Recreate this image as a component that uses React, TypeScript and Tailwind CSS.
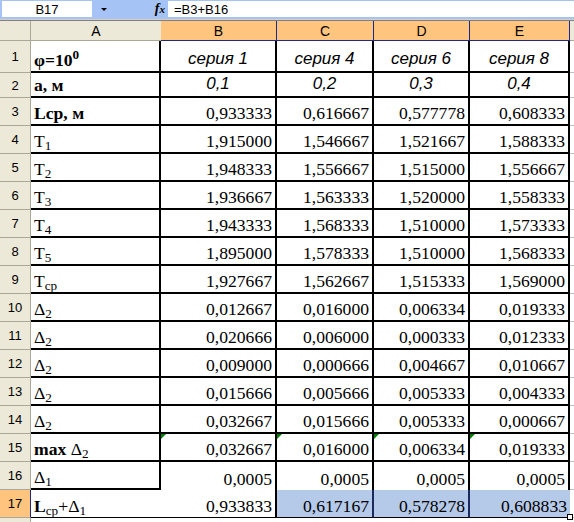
import React from 'react';

const W = ['w-[130px]', 'w-[116px]', 'w-[97px]', 'w-[96px]', 'w-[100px]'];
const HW = ['w-[130px]', 'w-[116px]', 'w-[97px]', 'w-[96px]', 'w-[100px]'];

type R = { n: number; h: string; label: React.ReactNode; vals: string[]; italic?: boolean };

const rows: R[] = [
  { n: 1, h: 'h-[32px]', label: <b>φ=10<sup>0</sup></b>, vals: ['серия 1', 'серия 4', 'серия 6', 'серия 8'], italic: true },
  { n: 2, h: 'h-[25px]', label: <b>a, м</b>, vals: ['0,1', '0,2', '0,3', '0,4'], italic: true },
  { n: 3, h: 'h-[28px]', label: <b>Lср, м</b>, vals: ['0,933333', '0,616667', '0,577778', '0,608333'] },
  { n: 4, h: 'h-[28px]', label: <>T<sub>1</sub></>, vals: ['1,915000', '1,546667', '1,521667', '1,588333'] },
  { n: 5, h: 'h-[28px]', label: <>T<sub>2</sub></>, vals: ['1,948333', '1,556667', '1,515000', '1,556667'] },
  { n: 6, h: 'h-[28px]', label: <>T<sub>3</sub></>, vals: ['1,936667', '1,563333', '1,520000', '1,558333'] },
  { n: 7, h: 'h-[28px]', label: <>T<sub>4</sub></>, vals: ['1,943333', '1,568333', '1,510000', '1,573333'] },
  { n: 8, h: 'h-[28px]', label: <>T<sub>5</sub></>, vals: ['1,895000', '1,578333', '1,510000', '1,568333'] },
  { n: 9, h: 'h-[28px]', label: <>T<sub>ср</sub></>, vals: ['1,927667', '1,562667', '1,515333', '1,569000'] },
  { n: 10, h: 'h-[28px]', label: <>Δ<sub>2</sub></>, vals: ['0,012667', '0,016000', '0,006334', '0,019333'] },
  { n: 11, h: 'h-[28px]', label: <>Δ<sub>2</sub></>, vals: ['0,020666', '0,006000', '0,000333', '0,012333'] },
  { n: 12, h: 'h-[28px]', label: <>Δ<sub>2</sub></>, vals: ['0,009000', '0,000666', '0,004667', '0,010667'] },
  { n: 13, h: 'h-[28px]', label: <>Δ<sub>2</sub></>, vals: ['0,015666', '0,005666', '0,005333', '0,004333'] },
  { n: 14, h: 'h-[28px]', label: <>Δ<sub>2</sub></>, vals: ['0,032667', '0,015666', '0,005333', '0,000667'] },
  { n: 15, h: 'h-[28px]', label: <><b>max</b> Δ<sub>2</sub></>, vals: ['0,032667', '0,016000', '0,006334', '0,019333'] },
  { n: 16, h: 'h-[28px]', label: <>Δ<sub>1</sub></>, vals: ['0,0005', '0,0005', '0,0005', '0,0005'] },
  { n: 17, h: 'h-[28px]', label: <><b>L</b><sub>ср</sub>+Δ<sub>1</sub></>, vals: ['0,933833', '0,617167', '0,578278', '0,608833'] },
];

function cellCls(r: number, c: number): string {
  if (r <= 15) return 'border-r-2 border-b-2 border-black bg-white';
  if (r === 16) return c === 0 ? 'border-r-2 border-b-2 border-black bg-white' : 'border-r-2 border-black bg-white';
  if (c === 0) return 'border-b border-black bg-white';
  if (c === 1) return 'border-r-2 border-b border-black bg-white';
  if (c === 4) return 'border-b border-black bg-[#B5C9E9]';
  return 'border-r-2 border-r-[#1B2A5E] border-b border-b-black bg-[#B5C9E9]';
}

export default function App() {
  return (
    <div className="w-[574px] h-[522px] overflow-hidden bg-white font-['Liberation_Sans',sans-serif] text-black">
      {/* formula bar */}
      <div className="h-[19px] bg-[#A6C3F5] flex items-start pt-[1px]">
        <div className="ml-[2px] w-[90px] h-[16px] bg-white flex items-center justify-center text-[13px] leading-none">B17</div>
        <div className="w-[76px] h-[16px] flex items-center">
          <div className="ml-[9px] w-0 h-0 border-l-[3px] border-r-[3px] border-t-[3px] border-l-transparent border-r-transparent border-t-black" />
          <div className="flex-1" />
          <span className="mr-[3px] font-['Liberation_Serif',serif] italic font-bold text-[14px] leading-none">
            f<span className="text-[11px]">x</span>
          </span>
        </div>
        <div className="flex-1 h-[16px] bg-white flex items-center pl-[6px] text-[13px] leading-none">=B3+B16</div>
      </div>
      <div className="h-[1px] bg-[#D4D0C8]" />
      <div className="h-[1px] bg-[#808080]" />
      {/* column header */}
      <div className="flex h-[20px] text-[14px] leading-none">
        <div className="w-[31px] shrink-0 bg-[#ECE9D8] border-r border-b border-[#ACA899]" />
        <div className={`${HW[0]} shrink-0 bg-[#ECE9D8] border-b border-[#ACA899] flex items-center justify-center`}>A</div>
        <div className={`${HW[1]} shrink-0 bg-[#FFC57E] border-r border-b border-[#1B2A8C] flex items-center justify-center`}>B</div>
        <div className={`${HW[2]} shrink-0 bg-[#FFC57E] border-r border-b border-[#1B2A8C] flex items-center justify-center`}>C</div>
        <div className={`${HW[3]} shrink-0 bg-[#FFC57E] border-r border-b border-[#1B2A8C] flex items-center justify-center`}>D</div>
        <div className={`${HW[4]} shrink-0 bg-[#FFC57E] border-r border-b border-[#1B2A8C] flex items-center justify-center`}>E</div>
        <div className="flex-1 bg-[#ECE9D8] border-b border-[#ACA899]" />
      </div>
      {/* body */}
      {rows.map((r) => (
        <div key={r.n} className={`flex ${r.h}`}>
          <div
            className={
              r.n === 17
                ? 'w-[31px] shrink-0 bg-[#FFC57E] border-r border-r-[#1B2A8C] border-b border-b-[#ACA899] flex items-center justify-center text-[13px] leading-none'
                : 'w-[31px] shrink-0 bg-[#ECE9D8] border-r border-b border-[#ACA899] flex items-center justify-center text-[13px] leading-none'
            }
          >
            {r.n}
          </div>
          <div className={`${W[0]} shrink-0 ${cellCls(r.n, 0)} flex items-end pl-[3px] pb-[1px] font-['Liberation_Serif',serif] text-[17.6px] leading-[20px] whitespace-nowrap`}>
            <span>{r.label}</span>
          </div>
          {r.vals.map((v, i) => (
            <div
              key={i}
              className={`${W[i + 1]} shrink-0 relative ${cellCls(r.n, i + 1)} flex items-end whitespace-nowrap ${
                r.italic
                  ? "justify-center pb-[2px] italic font-['Liberation_Sans',sans-serif] text-[17px] leading-[20px]"
                  : "justify-end pr-[3px] pb-[1px] font-['Liberation_Serif',serif] text-[17.6px] leading-[20px]"
              } ${r.n === 17 && i === 3 ? 'z-10' : ''}`}
            >
              {r.n === 15 && (
                <div className="absolute left-0 top-0 w-0 h-0 border-t-[5px] border-t-[#008000] border-r-[5px] border-r-transparent" />
              )}
              {v}
              {r.n === 17 && i === 3 && (
                <div className="absolute right-[-3px] bottom-[-3px] w-[6px] h-[6px] bg-white border border-black" />
              )}
            </div>
          ))}
          <div className="flex-1 bg-white border-b border-[#C0C0C0]" />
        </div>
      ))}
      <div className="flex h-[20px]">
        <div className="w-[31px] shrink-0 bg-[#ECE9D8] border-r border-[#ACA899]" />
        <div className="flex-1 bg-white" />
      </div>
    </div>
  );
}
